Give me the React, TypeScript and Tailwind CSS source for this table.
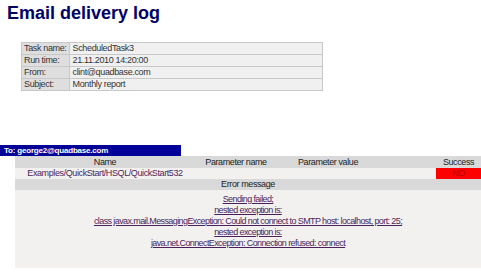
import React from 'react';

const taskInfo = [
  { label: 'Task name:', value: 'ScheduledTask3' },
  { label: 'Run time:', value: '21.11.2010 14:20:00' },
  { label: 'From:', value: 'clint@quadbase.com' },
  { label: 'Subject:', value: 'Monthly report' },
];

const errorLines = [
  'Sending failed;',
  'nested exception is:',
  'class javax.mail.MessagingException: Could not connect to SMTP host: localhost, port: 25;',
  'nested exception is:',
  'java.net.ConnectException: Connection refused: connect',
];

export default function App() {
  return (
    <div className="w-[481px] h-[272px] overflow-hidden bg-white font-['Liberation_Sans',Arial,sans-serif]">
      {/* Title */}
      <h1 className="pl-[7px] pt-[3px] text-[18px] leading-[21px] font-bold text-[#000066]">
        Email delivery log
      </h1>

      {/* Task details */}
      <table className="ml-[21px] mt-[18px] w-[302px] border-collapse text-[9px] tracking-[-0.35px] text-[#333]">
        <tbody>
          {taskInfo.map((row) => (
            <tr key={row.label} className="h-[12px]">
              <td className="w-[47px] whitespace-nowrap border border-[#c8c8c8] bg-[#dedede] px-[2px] py-0 leading-[11px]">
                {row.label}
              </td>
              <td className="whitespace-nowrap border border-[#c8c8c8] bg-[#f0f0f0] px-[3px] py-0 leading-[11px]">
                {row.value}
              </td>
            </tr>
          ))}
        </tbody>
      </table>

      {/* Recipient bar */}
      <div className="mt-[54px] h-[11px] w-[181px] bg-[#000099] pl-[4px] text-[8px] tracking-[-0.2px] leading-[11px] font-bold text-white">
        To: george2@quadbase.com
      </div>

      {/* Delivery result */}
      <div className="ml-[15px] w-[466px] text-[9px] tracking-[-0.4px]">
        <div className="flex h-[12px] items-center bg-[#d9d9d9] leading-[12px] text-[#222]">
          <div className="w-[180px] text-center">Name</div>
          <div className="w-[82px] text-center">Parameter name</div>
          <div className="w-[102px] text-center">Parameter value</div>
          <div className="w-[57px]" />
          <div className="w-[45px] text-center">Success</div>
        </div>
        <div className="flex h-[11px] items-center bg-[#f2f1f0] leading-[11px] text-[#4a1f5c]">
          <div className="w-[180px] whitespace-nowrap text-center">Examples/QuickStart/HSQL/QuickStart532</div>
          <div className="w-[82px]" />
          <div className="w-[102px]" />
          <div className="w-[57px]" />
          <div className="h-full w-[45px] bg-[#ff0000] text-center text-[#aa0000]">NO</div>
        </div>
        <div className="h-[11px] bg-[#d9d9d9] text-center leading-[11px] text-[#222]">Error message</div>
        <div className="flex h-[78px] flex-col items-center bg-[#f2f1f0] pt-[4px] tracking-[-0.6px] text-[#4a1f5c]">
          {errorLines.map((line, i) => (
            <a key={i} href="#" className="whitespace-nowrap leading-[11px] underline">
              {line}
            </a>
          ))}
        </div>
      </div>
    </div>
  );
}
